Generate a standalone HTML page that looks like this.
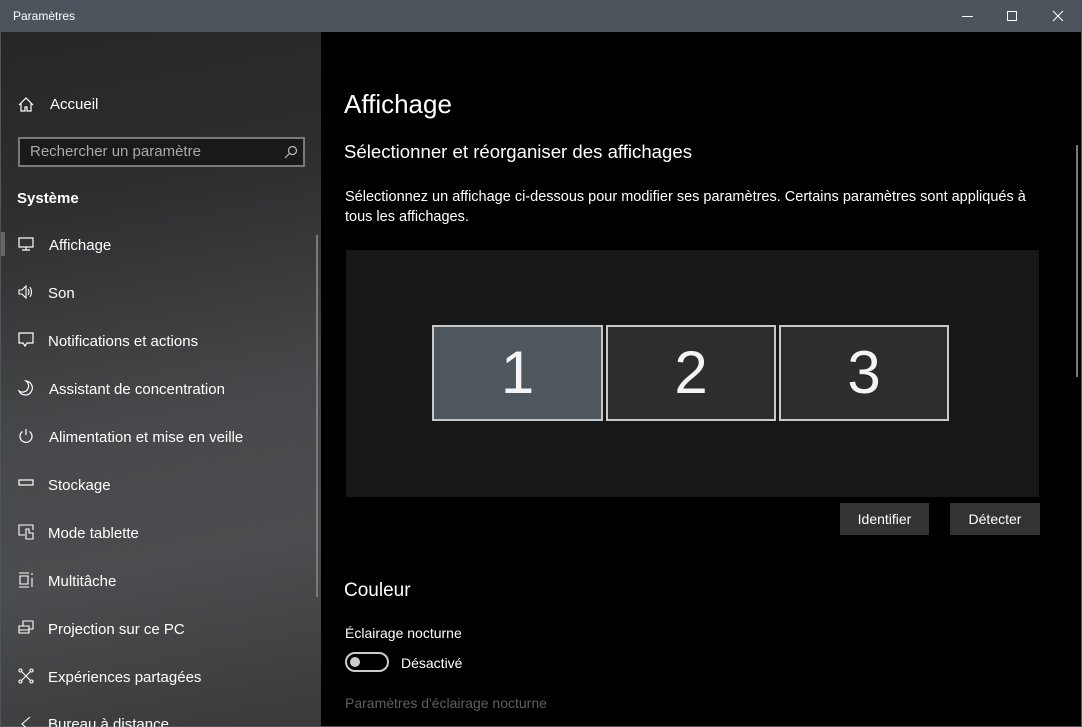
<!DOCTYPE html>
<html><head><meta charset="utf-8"><style>
*{margin:0;padding:0;box-sizing:border-box}
html,body{width:1082px;height:727px;overflow:hidden}
body{background:#4d565c;font-family:"Liberation Sans",sans-serif;color:#fff;position:relative}
.title{position:absolute;left:0;top:0;width:1082px;height:32px;background:#4c555b;font-size:12px}
.title span{position:absolute;left:13px;top:9px}
.side{position:absolute;left:1px;top:32px;width:320px;height:694px;background:linear-gradient(170deg,#262626 0%,#2f2f30 25%,#47484b 55%,#4b4c4f 75%,#3a3a3c 100%)}
.main{position:absolute;left:321px;top:32px;width:760px;height:694px;background:#000;overflow:hidden}
.abs{position:absolute;white-space:nowrap}
.nav{font-size:15px;color:#fff}
.btn{position:absolute;background:#333;font-size:14px;text-align:center;line-height:32px;height:32px}
.mon{position:absolute;top:293px;height:96px;border:2px solid #c8c8c8;font-size:60px;font-weight:300;text-align:center;line-height:92px;color:#f4f4f4}
</style></head><body>
<div class="title"><span>Paramètres</span>
<div class="abs" style="left:962px;top:16px;width:11px;height:1px;background:#fff"></div>
<div class="abs" style="left:1007px;top:11px;width:10px;height:10px;border:1px solid #fff"></div>
<svg class="abs" style="left:1052px;top:10px" width="12" height="12"><path d="M1 1L11 11M11 1L1 11" stroke="#fff" stroke-width="1"/></svg>
</div>
<div class="side">
<svg class="abs" style="left:17px;top:65px" width="16" height="15" fill="none" stroke="#fff" stroke-width="1.2"><path d="M1 8L8 1L15 8M3 6V14H7V10H9V14H13V6"/></svg>
<div class="abs nav" style="left:49px;top:64px">Accueil</div>
<div class="abs" style="left:17px;top:105px;width:287px;height:30px;border:2px solid #7a7a7a;background:#1a1a1a"></div>
<div class="abs" style="left:29px;top:111px;font-size:15px;color:#aaa">Rechercher un paramètre</div>
<svg class="abs" style="left:283px;top:113px" width="14" height="14" fill="none" stroke="#bbb" stroke-width="1.2"><circle cx="8.5" cy="5.5" r="4"/><path d="M5.5 8.5L1 13"/></svg>
<div class="abs" style="left:16px;top:158px;font-size:15px;font-weight:bold">Système</div>
<div class="abs" style="left:0;top:200px;width:4px;height:24px;background:#666"></div>
<div class="abs" style="left:315px;top:203px;width:2px;height:362px;background:#7a7a7a"></div>
<svg class="abs" style="left:17px;top:205px" width="16" height="14" fill="none" stroke="#fff" stroke-width="1.2"><rect x="1" y="1" width="14" height="9"/><path d="M8 10V13M4 13H12"/></svg>
<div class="abs nav" style="left:48px;top:205px">Affichage</div>
<svg class="abs" style="left:17px;top:253px" width="17" height="14" fill="none" stroke="#fff" stroke-width="1.1"><path d="M1 5H4L8 1V13L4 9H1Z M10 4Q12 7 10 10 M12 2Q15 7 12 12"/></svg>
<div class="abs nav" style="left:47px;top:253px">Son</div>
<svg class="abs" style="left:17px;top:300px" width="16" height="16" fill="none" stroke="#fff" stroke-width="1.2"><path d="M1 1H15V11H9L7 14L5 11H1Z"/></svg>
<div class="abs nav" style="left:47px;top:301px">Notifications et actions</div>
<svg class="abs" style="left:17px;top:348px" width="16" height="16" fill="none" stroke="#fff" stroke-width="1.2"><path d="M8 1A7 7 0 1 1 1 11A6 6 0 0 0 8 1Z"/></svg>
<div class="abs nav" style="left:48px;top:349px">Assistant de concentration</div>
<svg class="abs" style="left:17px;top:396px" width="16" height="16" fill="none" stroke="#fff" stroke-width="1.2"><path d="M8 1V7M4.5 3.5A6 6 0 1 0 11.5 3.5"/></svg>
<div class="abs nav" style="left:48px;top:397px">Alimentation et mise en veille</div>
<svg class="abs" style="left:17px;top:447px" width="16" height="8" fill="none" stroke="#fff" stroke-width="1.2"><rect x="1" y="1" width="14" height="5"/></svg>
<div class="abs nav" style="left:47px;top:445px">Stockage</div>
<svg class="abs" style="left:17px;top:492px" width="17" height="16" fill="none" stroke="#fff" stroke-width="1.1"><path d="M7 11H1V1H15V6M8 8V15H15V9H11V5H8Z"/></svg>
<div class="abs nav" style="left:47px;top:493px">Mode tablette</div>
<svg class="abs" style="left:17px;top:540px" width="16" height="16" fill="none" stroke="#fff" stroke-width="1.1"><path d="M1 1H11M1 15H11M2 4H10V12H2Z M14 1V3M14 6V15"/></svg>
<div class="abs nav" style="left:47px;top:541px">Multitâche</div>
<svg class="abs" style="left:17px;top:588px" width="16" height="16" fill="none" stroke="#fff" stroke-width="1.1"><path d="M5 6V1H15V9H11M1 6H11V13H1Z M1 10H11"/></svg>
<div class="abs nav" style="left:47px;top:589px">Projection sur ce PC</div>
<svg class="abs" style="left:17px;top:636px" width="16" height="16" fill="none" stroke="#fff" stroke-width="1.1"><circle cx="2.5" cy="2.5" r="1.5"/><circle cx="13.5" cy="2.5" r="1.5"/><circle cx="2.5" cy="13.5" r="1.5"/><circle cx="13.5" cy="13.5" r="1.5"/><path d="M4 4L12 12M12 4L4 12"/></svg>
<div class="abs nav" style="left:47px;top:637px">Expériences partagées</div>
<svg class="abs" style="left:17px;top:684px" width="16" height="16" fill="none" stroke="#fff" stroke-width="1.1"><path d="M12 1L4 8L12 15"/></svg>
<div class="abs nav" style="left:47px;top:684px">Bureau à distance</div>
</div>
<div class="main">
<div class="abs" style="left:23px;top:57px;font-size:26px;font-weight:300">Affichage</div>
<div class="abs" style="left:23px;top:109px;font-size:18.6px">Sélectionner et réorganiser des affichages</div>
<div class="abs" style="left:24px;top:155px;font-size:14.5px;line-height:20px">Sélectionnez un affichage ci-dessous pour modifier ses paramètres. Certains paramètres sont appliqués à<br>tous les affichages.</div>
<div class="abs" style="left:25px;top:218px;width:693px;height:247px;background:#171717"></div>
<div class="mon" style="left:111px;width:171px;background:#4e575d">1</div>
<div class="mon" style="left:285px;width:170px;background:#2d2d2d">2</div>
<div class="mon" style="left:458px;width:170px;background:#2d2d2d">3</div>
<div class="btn" style="left:519px;top:471px;width:89px">Identifier</div>
<div class="btn" style="left:629px;top:471px;width:90px">Détecter</div>
<div class="abs" style="left:23px;top:548px;font-size:19px">Couleur</div>
<div class="abs" style="left:24px;top:593px;font-size:14px">Éclairage nocturne</div>
<div class="abs" style="left:24px;top:620px;width:44px;height:20px;border:2px solid #ccc;border-radius:10px"></div>
<div class="abs" style="left:29px;top:625px;width:10px;height:10px;border-radius:5px;background:#ccc"></div>
<div class="abs" style="left:80px;top:623px;font-size:14px">Désactivé</div>
<div class="abs" style="left:24px;top:663px;font-size:14px;color:#5f5f5f">Paramètres d'éclairage nocturne</div>
<div class="abs" style="left:755px;top:113px;width:2px;height:232px;background:#7a7a7a"></div>
</div>
</body></html>
